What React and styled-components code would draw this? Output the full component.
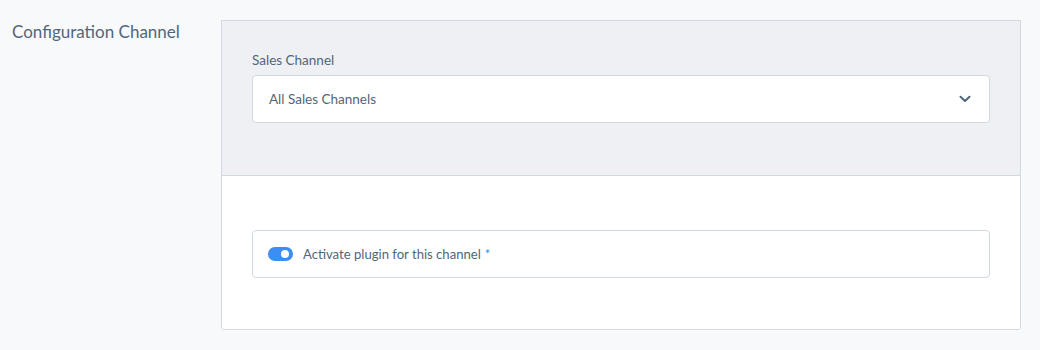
import React from "react";
import styled, { createGlobalStyle } from "styled-components";

const Global = createGlobalStyle`
  html, body { margin: 0; padding: 0; background: #f8f9fa; }
  body { font-family: Lato, "Source Sans Pro", sans-serif; color: #52667a; }
`;

const Page = styled.div`
  display: grid;
  grid-template-columns: 209px 800px;
  align-items: start;
  padding: 20px 0 0 12px;
`;

const SectionTitle = styled.div`
  font-size: 17px;
  line-height: 24px;
  padding-top: 0px;
  color: #52667a;
`;

const Card = styled.div`
  border: 1px solid #d1d9e0;
  border-radius: 0 0 3px 3px;
  background: #fff;
  overflow: hidden;
`;

const Section = styled.div`
  background: ${(p) => (p.$tinted ? "#eef0f4" : "#fff")};
  border-bottom: ${(p) => (p.$divider ? "1px solid #d1d9e0" : "none")};
  padding: ${(p) => p.$pad};
`;

const FieldLabel = styled.div`
  font-size: 13.5px;
  line-height: 18px;
  margin-bottom: 6px;
  color: #52667a;
`;

const SelectBox = styled.div`
  height: 48px;
  box-sizing: border-box;
  border: 1px solid #d1d9e0;
  border-radius: 4px;
  background: #fff;
  display: flex;
  align-items: center;
  justify-content: space-between;
  padding: 0 18px 0 16px;
  font-size: 13.5px;
`;

const Chevron = () => (
  <svg width="12" height="8" viewBox="0 0 12 8">
    <path d="M1.5 1.8 L6 6 L10.5 1.8" fill="none" stroke="#52667a" strokeWidth="2" strokeLinecap="round" strokeLinejoin="round" />
  </svg>
);

const SwitchRow = styled.div`
  height: 48px;
  box-sizing: border-box;
  border: 1px solid #d1d9e0;
  border-radius: 4px;
  background: #fff;
  display: flex;
  align-items: center;
  gap: 10px;
  padding: 0 16px 0 15px;
  font-size: 13.1px;
`;

const Toggle = styled.span`
  width: 25px;
  height: 14px;
  border-radius: 7px;
  background: #3c8ef5;
  position: relative;
  flex-shrink: 0;
  &::after {
    content: "";
    position: absolute;
    width: 8px;
    height: 8px;
    border-radius: 50%;
    background: #fff;
    top: 3px;
    right: 4px;
  }
`;

const Required = styled.span`
  color: #3c8ef5;
  margin-left: 4px;
`;

export default function App() {
  return (
    <>
      <Global />
      <Page>
        <SectionTitle>Configuration Channel</SectionTitle>
        <Card>
          <Section $tinted $divider $pad="30px 30px 52px">
            <FieldLabel>Sales Channel</FieldLabel>
            <SelectBox>
              <span>All Sales Channels</span>
              <Chevron />
            </SelectBox>
          </Section>
          <Section $pad="54px 30px 51px">
            <SwitchRow>
              <Toggle />
              <span>
                Activate plugin for this channel<Required>*</Required>
              </span>
            </SwitchRow>
          </Section>
        </Card>
      </Page>
    </>
  );
}
